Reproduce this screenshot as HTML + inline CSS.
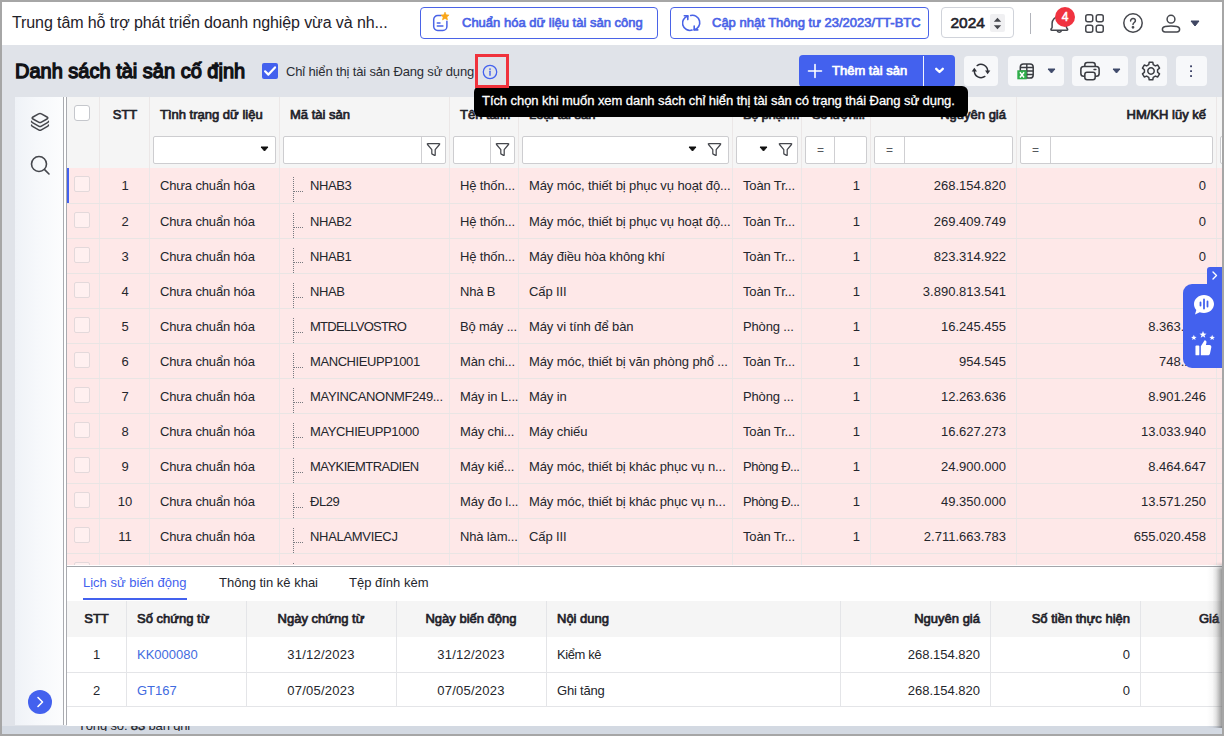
<!DOCTYPE html>
<html lang="vi">
<head>
<meta charset="utf-8">
<title>Danh sách tài sản cố định</title>
<style>
*{box-sizing:border-box;margin:0;padding:0}
html,body{width:1224px;height:736px;overflow:hidden;background:#a6a6a6}
body{font-family:"Liberation Sans",sans-serif;font-size:13px;color:#1f2229;position:relative}
#app{position:absolute;left:2px;top:2px;width:1220px;height:732px;background:#e0e3e9;overflow:hidden}
.abs{position:absolute}
/* ---------- top header ---------- */
#hdr{position:absolute;left:0;top:0;width:1220px;height:43px;background:#fff}
#org{position:absolute;left:10px;top:11px;font-size:16px;line-height:20px;color:#1f2229;white-space:nowrap;letter-spacing:-0.1px}
.obtn{position:absolute;top:5px;height:32px;border:1px solid #4a63e7;border-radius:4px;background:#fff;color:#4a63e7;-webkit-text-stroke:.65px #4a63e7;font-size:13px;line-height:30px;white-space:nowrap}
.obtn span{position:absolute;top:0}
#year{position:absolute;left:939px;top:5px;width:73px;height:31px;border:1px solid #d0d3da;border-radius:4px;background:#fff}
#year b{position:absolute;left:8.500px;top:5px;font-size:15.500px;font-weight:normal;-webkit-text-stroke:.6px #1f2229;line-height:20px;color:#1f2229}
#vsep{position:absolute;left:1028px;top:11px;width:1px;height:21px;background:#b2b4bb}
#badge{position:absolute;left:1053px;top:5px;width:20px;height:20px;border-radius:10px;background:#f03340;color:#fff;font-weight:normal;-webkit-text-stroke:.5px #fff;font-size:12px;line-height:20px;text-align:center}
/* ---------- toolbar ---------- */
#ttl{position:absolute;left:13px;top:57px;font-size:20px;line-height:24px;-webkit-text-stroke:1.300px #111216;color:#111216;white-space:nowrap}
#chk{position:absolute;left:260px;top:61px;width:16px;height:16px;border-radius:2px;background:#4361ee}
#chklbl{position:absolute;left:284px;top:62px;font-size:13px;line-height:16px;color:#2a2d34;white-space:nowrap;letter-spacing:-.15px}
#redbox{position:absolute;left:473px;top:52px;width:34px;height:34px;border:3px solid #f0323c;z-index:22}
#addbtn{position:absolute;left:797px;top:53px;width:156px;height:32px;border-radius:4px;background:#4361ee;color:#fff;-webkit-text-stroke:.7px #fff;font-size:13px}
#addbtn .t{position:absolute;left:33px;top:8px;line-height:16px;white-space:nowrap}
#addbtn .s{position:absolute;left:124px;top:1px;width:1px;height:31px;background:#f1f3fc}
.tb{position:absolute;top:54px;height:30px;border-radius:4px;background:#f7f8fa}
/* ---------- tooltip ---------- */
#tip{position:absolute;left:472px;top:84px;width:494px;height:31px;border-radius:6px;background:#000;color:#fff;font-size:13px;line-height:29px;padding-left:8px;letter-spacing:-.06px;-webkit-text-stroke:.3px #fff;white-space:nowrap;z-index:20}
/* ---------- sidebar ---------- */
#side{position:absolute;left:13px;top:95px;width:48px;height:628px;background:linear-gradient(90deg,#eff2f7 0,#f6f8fb 45%,#fcfdfe 100%)}
#sdiv{position:absolute;left:61px;top:95px;width:4px;height:628px;background:#fff;border-left:1px solid #a9abb0;border-right:1px solid #a9abb0}
#fab{position:absolute;left:26px;top:688px;width:24px;height:24px;border-radius:12px;background:#4361ee}
/* ---------- grid ---------- */
#grid{position:absolute;left:65px;top:95px;width:1155px;height:470px;background:#fee8e8;overflow:hidden}
.hrow{position:absolute;left:0;top:0;width:1155px;height:36px;background:#f5f5f5;border-bottom:1px solid #e1e1e2}
.frow{position:absolute;left:0;top:35px;width:1155px;height:36px;background:#f5f5f5}
.vl{position:absolute;top:0;width:1px;height:470px;background:#ebe7e7}
.hc{position:absolute;top:10px;-webkit-text-stroke:.7px #1f2229;font-size:13px;line-height:16px;color:#1f2229;white-space:nowrap}
.fi{position:absolute;top:39px;height:28px;background:#fff;border:1px solid #cdcdd0;border-radius:2px}
.row{position:absolute;left:0;width:1155px;height:35px;border-bottom:1px solid #e9e5e4}
.row span{position:absolute;top:10px;line-height:16px;font-size:13px;color:#24262c;white-space:nowrap}
.row i{position:absolute;left:7px;top:8px;width:16px;height:16px;border-radius:2px;background:#fff0f0;border:1px solid #e3d9db}
.c1{left:33px;width:50px;text-align:center}
.c2{left:93px;letter-spacing:-.15px}
.c3{left:243px;letter-spacing:-.55px}
.c4{left:393px;letter-spacing:-.15px}
.c5{left:462px;letter-spacing:-.1px}
.c6{left:676px;letter-spacing:-.15px}
.c7{left:745px;width:48px;text-align:right}
.c8{left:814px;width:125px;text-align:right}
.c9{left:960px;width:179px;text-align:right}
.tree{position:absolute;left:225px;top:1px;width:12px;height:35px}
/* ---------- bottom panel ---------- */
#bot{position:absolute;left:65px;top:564px;width:1155px;height:160px;z-index:5;background:#fff;border-top:1px solid #a3a5aa}
.tab{position:absolute;top:8px;font-size:13px;line-height:16px;color:#24262c;white-space:nowrap}
#bh{position:absolute;left:0;top:34px;width:1155px;height:36px;background:#f5f5f5}
.bhc{position:absolute;top:44px;-webkit-text-stroke:.7px #1f2229;font-size:13px;line-height:16px;color:#1f2229;white-space:nowrap}
.brow{position:absolute;left:0;width:1155px;height:36px;border-bottom:1px solid #e4e5e8}
.brow span{position:absolute;top:10px;line-height:16px;font-size:13px;color:#24262c;white-space:nowrap}
.bvl{position:absolute;top:34px;width:1px;height:106px;background:#e4e5e8}
#foot{position:absolute;left:76px;letter-spacing:-.15px;top:716px;height:13px;overflow:hidden;z-index:4;font-size:13px;line-height:16px;color:#24262c;white-space:nowrap}
#rshadow{position:absolute;left:1205px;top:560px;width:15px;height:166px;background:linear-gradient(90deg,rgba(90,90,90,0) 0,rgba(90,90,90,.04) 35%,rgba(90,90,90,.17) 60%,rgba(90,90,90,.42) 82%,rgba(90,90,90,.62) 100%);z-index:30;-webkit-mask-image:linear-gradient(180deg,transparent 0,#000 8px);mask-image:linear-gradient(180deg,transparent 0,#000 8px)}
</style>
</head>
<body>
<div id="app">
<div id="hdr">
<div id="org">Trung tâm hỗ trợ phát triển doanh nghiệp vừa và nh...</div>
<div class="obtn" style="left:418px;width:238px">
<svg class="abs" style="left:11px;top:4px" width="20" height="22" viewBox="0 0 20 22" fill="none"><path d="M9.200 3.600H5.700A4 4 0 0 0 1.700 7.600V14.500A4 4 0 0 0 5.700 18.500H10.900A4 4 0 0 0 14.900 14.500V9.300" stroke="#4a63e7" stroke-width="1.500" stroke-linecap="round"/><path d="M5.300 11H8M5.300 14.100H10.900" stroke="#4a63e7" stroke-width="1.500" stroke-linecap="round"/><path d="M13.00 0.10L14.18 2.78L17.09 3.07L14.90 5.02L15.53 7.88L13.00 6.40L10.47 7.88L11.10 5.02L8.91 3.07L11.82 2.78Z" fill="#f9a61a" stroke="#f9a61a" stroke-width=".6" stroke-linejoin="round"/></svg>
<span style="left:41px">Chuẩn hóa dữ liệu tài sản công</span></div>
<div class="obtn" style="left:668px;width:259px">
<svg class="abs" style="left:11px;top:4px" width="20" height="22" viewBox="0 0 20 22" fill="none" stroke="#4a63e7" stroke-width="1.600" stroke-linecap="round" stroke-linejoin="round"><path d="M10 18.100A7.300 7.300 0 0 1 5.800 4.100"/><path d="M2.300 3.800H5.800V7.600"/><path d="M8.700 3.500A7.300 7.300 0 0 1 12.100 17.800"/><path d="M12.200 14.100V17.900H15.800"/></svg>
<span style="left:41px">Cập nhật Thông tư 23/2023/TT-BTC</span></div>
<div id="year"><b>2024</b>
<div class="abs" style="left:48px;top:6px;width:15px;height:18px;background:#f0f0f2;border-radius:2px"></div>
<svg class="abs" style="left:51px;top:8.500px" width="9" height="13" viewBox="0 0 9 13"><path d="M.8 4.800L4.500 .8 8.200 4.800Z" fill="#45474d"/><path d="M.8 8.200L4.500 12.200 8.200 8.200Z" fill="#45474d"/></svg></div>
<div id="vsep"></div>
<svg class="abs" style="left:1046px;top:12px" width="22" height="22" viewBox="0 0 22 22" fill="none" stroke="#45474d" stroke-width="1.500" stroke-linecap="round" stroke-linejoin="round"><path d="M4.100 13.600V9.600C4.100 5.600 7.300 2.400 11.300 2.400 15.300 2.400 18.500 5.600 18.500 9.600V13.600L19.500 15C19.900 15.600 19.600 16.200 18.900 16.200H3.700C3 16.200 2.700 15.600 3.100 15Z"/><path d="M9.500 17.400C10 18.400 12.600 18.400 13.100 17.400"/></svg>
<div id="badge">4</div>
<svg class="abs" style="left:1082px;top:11px" width="22" height="22" viewBox="0 0 22 22" fill="none" stroke="#45474d" stroke-width="1.500"><rect x="1.750" y="1.750" width="7" height="7" rx="2"/><rect x="12.250" y="1.750" width="7" height="7" rx="2"/><rect x="1.750" y="12.250" width="7" height="7" rx="2"/><rect x="12.250" y="12.250" width="7" height="7" rx="2"/></svg>
<svg class="abs" style="left:1119px;top:9px" width="24" height="24" viewBox="0 0 24 24" fill="none" stroke="#45474d" stroke-width="1.500" stroke-linecap="round"><circle cx="12" cy="12" r="9.200"/><path d="M9.600 10C9.600 8.500 10.600 7.600 12 7.600 13.400 7.600 14.400 8.500 14.400 9.800 14.400 11.500 12 11.600 12 13.500"/><circle cx="12" cy="16.300" r="0.650" fill="#45474d"/></svg>
<svg class="abs" style="left:1158px;top:11px" width="22" height="22" viewBox="0 0 22 22" fill="none" stroke="#45474d" stroke-width="1.500" stroke-linejoin="round"><circle cx="11" cy="6.200" r="3.900"/><path d="M5.200 13.600C7 13.200 9 13.100 11 13.100 13 13.100 15 13.200 16.800 13.600 18.600 14 19.600 14.800 19.600 16.300 19.600 18 18.600 18.900 16.900 18.900H5.100C3.400 18.900 2.400 18 2.400 16.300 2.400 14.800 3.400 14 5.200 13.600Z"/></svg>
<svg class="abs" style="left:1188px;top:18px" width="10" height="7" viewBox="0 0 10 7"><path d="M1 1H9L5 6Z" fill="#3f4662" stroke="#3f4662" stroke-width="1" stroke-linejoin="round"/></svg>
</div>
<div id="ttl">Danh sách tài sản cố định</div>
<div id="chk"><svg class="abs" style="left:0;top:0" width="16" height="16" viewBox="0 0 16 16" fill="none"><path d="M3.100 8.300L6.400 11.600 13 4.400" stroke="#fff" stroke-width="2.200" stroke-linecap="round" stroke-linejoin="round"/></svg></div>
<div id="chklbl">Chỉ hiển thị tài sản Đang sử dụng</div>
<svg class="abs" style="left:480px;top:62px" width="16" height="16" viewBox="0 0 16 16" fill="none"><circle cx="8" cy="8" r="6.700" stroke="#4361ee" stroke-width="1.300"/><circle cx="8" cy="5.100" r="0.900" fill="#4361ee"/><path d="M8 7.300V11.300" stroke="#4361ee" stroke-width="1.400" stroke-linecap="round"/></svg>
<div id="redbox"></div>
<div id="addbtn"><svg class="abs" style="left:8px;top:8px" width="16" height="16" viewBox="0 0 16 16"><path d="M8 1.500V14.500M1.500 8H14.500" stroke="#fff" stroke-width="1.600" stroke-linecap="round"/></svg><div class="t">Thêm tài sản</div><div class="s"></div>
<svg class="abs" style="left:135px;top:12px" width="11" height="8" viewBox="0 0 11 8" fill="none"><path d="M2.200 1.800L5.500 5 8.800 1.800" stroke="#fff" stroke-width="2.300" stroke-linecap="round" stroke-linejoin="round"/></svg></div>
<div class="tb" style="left:962px;width:34px"><svg class="abs" style="left:6px;top:4px" width="22" height="22" viewBox="0 0 22 22" fill="none"><path d="M7.160 5.510A6.700 6.700 0 0 1 17.670 11" stroke="#2f3138" stroke-width="1.500" stroke-linecap="round"/><path d="M15 10.600H20.300L17.650 14.200Z" fill="#2f3138"/><path d="M14.840 16.490A6.700 6.700 0 0 1 4.330 11" stroke="#2f3138" stroke-width="1.500" stroke-linecap="round"/><path d="M7 11.400H1.700L4.350 7.800Z" fill="#2f3138"/></svg></div>
<div class="tb" style="left:1006px;width:56px"><svg class="abs" style="left:9px;top:5px" width="20" height="20" viewBox="0 0 20 20" fill="none"><path d="M6.500 2.900H13C15 2.900 16.200 4.100 16.200 6.100V13.900C16.200 15.900 15 17.100 13 17.100H6.500C4.500 17.100 3.300 15.900 3.300 13.900V6.100C3.300 4.100 4.500 2.900 6.500 2.900Z" stroke="#3a3c42" stroke-width="1.500"/><path d="M3.300 6.500H16.200M3.300 10H16.200M3.300 13.500H16.200M9.800 2.900V17.100" stroke="#3a3c42" stroke-width="1.400"/><rect x="0.300" y="9.300" width="9.400" height="9" fill="#2fae4a"/><path d="M2.900 11.300L7.100 16.500M7.100 11.300L2.900 16.500" stroke="#fff" stroke-width="1.500"/></svg>
<svg class="abs" style="left:39px;top:12px" width="9" height="6" viewBox="0 0 9 6"><path d="M1 1H8L4.500 5Z" fill="#3f4a6b" stroke="#3f4a6b" stroke-width="1" stroke-linejoin="round"/></svg></div>
<div class="tb" style="left:1070px;width:56px"><svg class="abs" style="left:7px;top:4px" width="22" height="22" viewBox="0 0 20 20" fill="none" stroke="#3a3c42" stroke-width="1.400" stroke-linejoin="round"><path d="M5.300 6V4.300C5.300 3 6.200 2.200 7.500 2.200H12.500C13.800 2.200 14.700 3 14.700 4.300V6"/><path d="M5.300 14.700H4.200C2.700 14.700 1.700 13.700 1.700 12.200V8.500C1.700 7 2.700 6 4.200 6H15.800C17.300 6 18.300 7 18.300 8.500V12.200C18.300 13.700 17.300 14.700 15.800 14.700H14.700"/><rect x="5.300" y="11.200" width="9.400" height="6.700" rx="2"/><path d="M13.700 8.700H15.300" stroke-linecap="round"/></svg>
<svg class="abs" style="left:40px;top:12px" width="9" height="6" viewBox="0 0 9 6"><path d="M1 1H8L4.500 5Z" fill="#3f4a6b" stroke="#3f4a6b" stroke-width="1" stroke-linejoin="round"/></svg></div>
<div class="tb" style="left:1134px;width:31px"><svg class="abs" style="left:4px;top:4px" width="22" height="22" viewBox="-11 -11 22 22" fill="none" stroke="#3a3c42" stroke-width="1.500" stroke-linejoin="round"><circle cx="0" cy="0" r="3.200"/><path d="M-2.230 -6.320 L-1.790 -8.820 L1.790 -8.820 L2.230 -6.320 L4.350 -5.090 L6.740 -5.960 L8.530 -2.860 L6.590 -1.220 L6.590 1.220 L8.530 2.860 L6.740 5.960 L4.350 5.090 L2.230 6.320 L1.790 8.820 L-1.790 8.820 L-2.230 6.320 L-4.350 5.090 L-6.740 5.960 L-8.530 2.860 L-6.590 1.220 L-6.590 -1.220 L-8.530 -2.860 L-6.740 -5.960 L-4.350 -5.090Z"/></svg></div>
<div class="tb" style="left:1174px;width:31px"><svg class="abs" style="left:13px;top:7px" width="4" height="16" viewBox="0 0 4 16" fill="#3b4166"><rect x="1.100" y="2.300" width="1.900" height="1.900" rx=".4"/><rect x="1.100" y="7.200" width="1.900" height="1.900" rx=".4"/><rect x="1.100" y="12.100" width="1.900" height="1.900" rx=".4"/></svg></div>
<div id="tip">Tích chọn khi muốn xem danh sách chỉ hiển thị tài sản có trạng thái Đang sử dụng.</div>
<div id="side">
<svg class="abs" style="left:13px;top:13px" width="24" height="24" viewBox="0 0 24 24" fill="none" stroke="#45474d" stroke-width="1.500" stroke-linejoin="round" stroke-linecap="round"><path d="M5 7L10.600 3.800Q12 3 13.400 3.800L19 7Q20.700 8 19 9L13.400 12.200Q12 13 10.600 12.200L5 9Q3.300 8 5 7Z"/><path d="M3.600 11.300Q3.300 11.900 4.500 12.600L10.600 16.100Q12 16.900 13.400 16.100L19.500 12.600Q20.700 11.900 20.400 11.300"/><path d="M3.600 15.100Q3.300 15.700 4.500 16.400L10.600 19.900Q12 20.700 13.400 19.900L19.500 16.400Q20.700 15.700 20.400 15.100"/></svg>
<svg class="abs" style="left:13px;top:56px" width="24" height="24" viewBox="0 0 24 24" fill="none" stroke="#45474d" stroke-width="1.600" stroke-linecap="round"><circle cx="11" cy="11" r="7.500"/><path d="M16.600 16.600L21 21"/></svg>
</div>
<div id="sdiv"></div>
<div id="fab"><svg class="abs" style="left:8px;top:6px" width="8" height="12" viewBox="0 0 8 12" fill="none"><path d="M2 1.500L6.500 6 2 10.500" stroke="#fff" stroke-width="1.600" stroke-linecap="round" stroke-linejoin="round"/></svg></div>
<div id="grid">
<div class="hrow"></div><div class="frow"></div>
<div class="vl" style="left:32px"></div>
<div class="vl" style="left:82px"></div>
<div class="vl" style="left:212px"></div>
<div class="vl" style="left:382px"></div>
<div class="vl" style="left:451px"></div>
<div class="vl" style="left:665px"></div>
<div class="vl" style="left:734px"></div>
<div class="vl" style="left:803px"></div>
<div class="vl" style="left:949px"></div>
<div class="vl" style="left:1149px"></div>
<div class="abs" style="left:7px;top:8px;width:16px;height:16px;border:1px solid #c5c7cc;border-radius:3px;background:#fff"></div>
<div class="hc" style="left:33px;width:50px;text-align:center">STT</div>
<div class="hc" style="left:93px">Tình trạng dữ liệu</div>
<div class="hc" style="left:223px">Mã tài sản</div>
<div class="hc" style="left:393px">Tên tài...</div>
<div class="hc" style="left:462px">Loại tài sản</div>
<div class="hc" style="left:676px;letter-spacing:-.3px">Bộ phận...</div>
<div class="hc" style="left:745px;letter-spacing:-.5px">Số lượn...</div>
<div class="hc" style="left:814px;width:125px;text-align:right">Nguyên giá</div>
<div class="hc" style="left:960px;width:179px;text-align:right">HM/KH lũy kế</div>
<div class="fi" style="left:86px;width:123px"><svg class="abs" style="left:106px;top:9px" width="9" height="6" viewBox="0 0 9 6"><path d="M1 1H8L4.500 5Z" fill="#111" stroke="#111" stroke-width="1" stroke-linejoin="round"/></svg></div>
<div class="fi" style="left:216px;width:163px"><div class="abs" style="left:137px;top:0;width:1px;height:26px;background:#cfcfd2"></div><svg class="abs" style="left:142px;top:5px" width="15" height="15" viewBox="0 0 15 15" fill="none"><path d="M1.900 1.600H13.100Q14.100 1.600 13.500 2.500L9.200 7.600V13Q9.200 13.700 8.600 13.400L6.200 12.100Q5.800 11.900 5.800 11.400V7.600L1.500 2.500Q.9 1.600 1.900 1.600Z" stroke="#45474d" stroke-width="1.250" stroke-linejoin="round"/></svg></div>
<div class="fi" style="left:386px;width:62px"><div class="abs" style="left:36px;top:0;width:1px;height:26px;background:#cfcfd2"></div><svg class="abs" style="left:41px;top:5px" width="15" height="15" viewBox="0 0 15 15" fill="none"><path d="M1.900 1.600H13.100Q14.100 1.600 13.500 2.500L9.200 7.600V13Q9.200 13.700 8.600 13.400L6.200 12.100Q5.800 11.900 5.800 11.400V7.600L1.500 2.500Q.9 1.600 1.900 1.600Z" stroke="#45474d" stroke-width="1.250" stroke-linejoin="round"/></svg></div>
<div class="fi" style="left:455px;width:207px"><svg class="abs" style="left:165px;top:9px" width="9" height="6" viewBox="0 0 9 6"><path d="M1 1H8L4.500 5Z" fill="#111" stroke="#111" stroke-width="1" stroke-linejoin="round"/></svg><svg class="abs" style="left:184px;top:5px" width="15" height="15" viewBox="0 0 15 15" fill="none"><path d="M1.900 1.600H13.100Q14.100 1.600 13.500 2.500L9.200 7.600V13Q9.200 13.700 8.600 13.400L6.200 12.100Q5.800 11.900 5.800 11.400V7.600L1.500 2.500Q.9 1.600 1.900 1.600Z" stroke="#45474d" stroke-width="1.250" stroke-linejoin="round"/></svg></div>
<div class="fi" style="left:669px;width:62px"><svg class="abs" style="left:22px;top:9px" width="9" height="6" viewBox="0 0 9 6"><path d="M1 1H8L4.500 5Z" fill="#111" stroke="#111" stroke-width="1" stroke-linejoin="round"/></svg><svg class="abs" style="left:41px;top:5px" width="15" height="15" viewBox="0 0 15 15" fill="none"><path d="M1.900 1.600H13.100Q14.100 1.600 13.500 2.500L9.200 7.600V13Q9.200 13.700 8.600 13.400L6.200 12.100Q5.800 11.900 5.800 11.400V7.600L1.500 2.500Q.9 1.600 1.900 1.600Z" stroke="#45474d" stroke-width="1.250" stroke-linejoin="round"/></svg></div>
<div class="fi" style="left:738px;width:62px"><div class="abs" style="left:11px;top:5px;font-size:12px;line-height:16px;color:#55585f">=</div><div class="abs" style="left:28px;top:0;width:1px;height:26px;background:#cfcfd2"></div></div>
<div class="fi" style="left:807px;width:139px"><div class="abs" style="left:11px;top:5px;font-size:12px;line-height:16px;color:#55585f">=</div><div class="abs" style="left:29px;top:0;width:1px;height:26px;background:#cfcfd2"></div></div>
<div class="fi" style="left:953px;width:193px"><div class="abs" style="left:11px;top:5px;font-size:12px;line-height:16px;color:#55585f">=</div><div class="abs" style="left:29px;top:0;width:1px;height:26px;background:#cfcfd2"></div></div>
<div class="fi" style="left:1153px;width:80px"></div>
<div class="row" style="top:71px;height:36px"><i></i><span class="c1">1</span><span class="c2">Chưa chuẩn hóa</span><svg class="tree" viewBox="0 0 12 35" fill="none" stroke="#77797f" stroke-width="1" stroke-dasharray="1 1"><path d="M1.500 8V33"/><path d="M2 22.500H12"/></svg><span class="c3" style="letter-spacing:-0.38px">NHAB3</span><span class="c4">Hệ thốn...</span><span class="c5">Máy móc, thiết bị phục vụ hoạt độ...</span><span class="c6">Toàn Tr...</span><span class="c7">1</span><span class="c8">268.154.820</span><span class="c9">0</span></div>
<div class="row" style="top:107px"><i></i><span class="c1">2</span><span class="c2">Chưa chuẩn hóa</span><svg class="tree" viewBox="0 0 12 35" fill="none" stroke="#77797f" stroke-width="1" stroke-dasharray="1 1"><path d="M1.500 8V33"/><path d="M2 22.500H12"/></svg><span class="c3" style="letter-spacing:-0.38px">NHAB2</span><span class="c4">Hệ thốn...</span><span class="c5">Máy móc, thiết bị phục vụ hoạt độ...</span><span class="c6">Toàn Tr...</span><span class="c7">1</span><span class="c8">269.409.749</span><span class="c9">0</span></div>
<div class="row" style="top:142px"><i></i><span class="c1">3</span><span class="c2">Chưa chuẩn hóa</span><svg class="tree" viewBox="0 0 12 35" fill="none" stroke="#77797f" stroke-width="1" stroke-dasharray="1 1"><path d="M1.500 8V33"/><path d="M2 22.500H12"/></svg><span class="c3" style="letter-spacing:-0.38px">NHAB1</span><span class="c4">Hệ thốn...</span><span class="c5">Máy điều hòa không khí</span><span class="c6">Toàn Tr...</span><span class="c7">1</span><span class="c8">823.314.922</span><span class="c9">0</span></div>
<div class="row" style="top:177px"><i></i><span class="c1">4</span><span class="c2">Chưa chuẩn hóa</span><svg class="tree" viewBox="0 0 12 35" fill="none" stroke="#77797f" stroke-width="1" stroke-dasharray="1 1"><path d="M1.500 8V33"/><path d="M2 22.500H12"/></svg><span class="c3" style="letter-spacing:-0.4px">NHAB</span><span class="c4">Nhà B</span><span class="c5">Cấp III</span><span class="c6">Toàn Tr...</span><span class="c7">1</span><span class="c8">3.890.813.541</span><span class="c9">0</span></div>
<div class="row" style="top:212px"><i></i><span class="c1">5</span><span class="c2">Chưa chuẩn hóa</span><svg class="tree" viewBox="0 0 12 35" fill="none" stroke="#77797f" stroke-width="1" stroke-dasharray="1 1"><path d="M1.500 8V33"/><path d="M2 22.500H12"/></svg><span class="c3" style="letter-spacing:-0.76px">MTDELLVOSTRO</span><span class="c4">Bộ máy ...</span><span class="c5">Máy vi tính để bàn</span><span class="c6">Phòng ...</span><span class="c7">1</span><span class="c8">16.245.455</span><span class="c9">8.363.636</span></div>
<div class="row" style="top:247px"><i></i><span class="c1">6</span><span class="c2">Chưa chuẩn hóa</span><svg class="tree" viewBox="0 0 12 35" fill="none" stroke="#77797f" stroke-width="1" stroke-dasharray="1 1"><path d="M1.500 8V33"/><path d="M2 22.500H12"/></svg><span class="c3" style="letter-spacing:-0.42px">MANCHIEUPP1001</span><span class="c4">Màn chi...</span><span class="c5">Máy móc, thiết bị văn phòng phổ ...</span><span class="c6">Toàn Tr...</span><span class="c7">1</span><span class="c8">954.545</span><span class="c9">748.182</span></div>
<div class="row" style="top:282px"><i></i><span class="c1">7</span><span class="c2">Chưa chuẩn hóa</span><svg class="tree" viewBox="0 0 12 35" fill="none" stroke="#77797f" stroke-width="1" stroke-dasharray="1 1"><path d="M1.500 8V33"/><path d="M2 22.500H12"/></svg><span class="c3" style="letter-spacing:-0.32px">MAYINCANONMF249...</span><span class="c4">Máy in L...</span><span class="c5">Máy in</span><span class="c6">Phòng ...</span><span class="c7">1</span><span class="c8">12.263.636</span><span class="c9">8.901.246</span></div>
<div class="row" style="top:317px"><i></i><span class="c1">8</span><span class="c2">Chưa chuẩn hóa</span><svg class="tree" viewBox="0 0 12 35" fill="none" stroke="#77797f" stroke-width="1" stroke-dasharray="1 1"><path d="M1.500 8V33"/><path d="M2 22.500H12"/></svg><span class="c3" style="letter-spacing:-0.37px">MAYCHIEUPP1000</span><span class="c4">Máy chi...</span><span class="c5">Máy chiếu</span><span class="c6">Toàn Tr...</span><span class="c7">1</span><span class="c8">16.627.273</span><span class="c9">13.033.940</span></div>
<div class="row" style="top:352px"><i></i><span class="c1">9</span><span class="c2">Chưa chuẩn hóa</span><svg class="tree" viewBox="0 0 12 35" fill="none" stroke="#77797f" stroke-width="1" stroke-dasharray="1 1"><path d="M1.500 8V33"/><path d="M2 22.500H12"/></svg><span class="c3" style="letter-spacing:-0.53px">MAYKIEMTRADIEN</span><span class="c4">Máy kiể...</span><span class="c5">Máy móc, thiết bị khác phục vụ n...</span><span class="c6" style="letter-spacing:-.5px">Phòng Đ...</span><span class="c7">1</span><span class="c8">24.900.000</span><span class="c9">8.464.647</span></div>
<div class="row" style="top:387px"><i></i><span class="c1">10</span><span class="c2">Chưa chuẩn hóa</span><svg class="tree" viewBox="0 0 12 35" fill="none" stroke="#77797f" stroke-width="1" stroke-dasharray="1 1"><path d="M1.500 8V33"/><path d="M2 22.500H12"/></svg><span class="c3" style="letter-spacing:-0.47px">ĐL29</span><span class="c4">Máy đo l...</span><span class="c5">Máy móc, thiết bị khác phục vụ n...</span><span class="c6" style="letter-spacing:-.5px">Phòng Đ...</span><span class="c7">1</span><span class="c8">49.350.000</span><span class="c9">13.571.250</span></div>
<div class="row" style="top:422px"><i></i><span class="c1">11</span><span class="c2">Chưa chuẩn hóa</span><svg class="tree" viewBox="0 0 12 35" fill="none" stroke="#77797f" stroke-width="1" stroke-dasharray="1 1"><path d="M1.500 8V33"/><path d="M2 22.500H12"/></svg><span class="c3" style="letter-spacing:-0.31px">NHALAMVIECJ</span><span class="c4">Nhà làm...</span><span class="c5">Cấp III</span><span class="c6">Toàn Tr...</span><span class="c7">1</span><span class="c8">2.711.663.783</span><span class="c9">655.020.458</span></div>
<div class="row" style="top:457px"><i></i><svg class="tree" viewBox="0 0 12 35" fill="none" stroke="#77797f" stroke-width="1" stroke-dasharray="1 1"><path d="M1.500 8V33"/><path d="M2 22.500H12"/></svg></div>
<div class="abs" style="left:0;top:71px;width:2px;height:35px;background:#4361ee"></div>
</div>
<div id="bot">
<div class="tab" style="left:16px;color:#4361ee">Lịch sử biến động</div>
<div class="abs" style="left:16px;top:31px;width:104px;height:2px;background:#4361ee"></div>
<div class="tab" style="left:152px">Thông tin kê khai</div>
<div class="tab" style="left:282px">Tệp đính kèm</div>
<div id="bh"></div>
<div class="bvl" style="left:59px"></div>
<div class="bvl" style="left:179px"></div>
<div class="bvl" style="left:329px"></div>
<div class="bvl" style="left:479px"></div>
<div class="bvl" style="left:773px"></div>
<div class="bvl" style="left:923px"></div>
<div class="bvl" style="left:1073px"></div>
<div class="bhc" style="left:0;width:59px;text-align:center">STT</div>
<div class="bhc" style="left:70px">Số chứng từ</div>
<div class="bhc" style="left:179px;width:150px;text-align:center">Ngày chứng từ</div>
<div class="bhc" style="left:329px;width:150px;text-align:center">Ngày biến động</div>
<div class="bhc" style="left:490px">Nội dung</div>
<div class="bhc" style="left:773px;width:140px;text-align:right">Nguyên giá</div>
<div class="bhc" style="left:923px;width:140px;text-align:right">Số tiền thực hiện</div>
<div class="bhc" style="left:1132px">Giá trị còn lại</div>
<div class="brow" style="top:70px"><span style="left:0;width:59px;text-align:center">1</span><span style="left:70px;color:#3f6be0">KK000080</span><span style="left:179px;width:150px;text-align:center;letter-spacing:.25px">31/12/2023</span><span style="left:329px;width:150px;text-align:center;letter-spacing:.25px">31/12/2023</span><span style="left:490px;letter-spacing:-.4px">Kiểm kê</span><span style="left:773px;width:140px;text-align:right">268.154.820</span><span style="left:923px;width:140px;text-align:right">0</span></div>
<div class="brow" style="top:106px;height:34px"><span style="left:0;width:59px;text-align:center">2</span><span style="left:70px;color:#3f6be0">GT167</span><span style="left:179px;width:150px;text-align:center;letter-spacing:.25px">07/05/2023</span><span style="left:329px;width:150px;text-align:center;letter-spacing:.25px">07/05/2023</span><span style="left:490px;letter-spacing:-.2px">Ghi tăng</span><span style="left:773px;width:140px;text-align:right">268.154.820</span><span style="left:923px;width:140px;text-align:right">0</span></div>
</div>
<div class="abs" style="left:65px;top:563px;width:1155px;height:1px;background:#fff;z-index:5"></div>
<div id="foot">Tổng số: <b style="font-weight:normal;-webkit-text-stroke:.5px #24262c">83</b> bản ghi</div>
<div class="abs" style="left:0;top:724px;width:1220px;height:8px;background:#d3d9e2;z-index:3"></div>
<div id="rshadow"></div>
<div class="abs" style="left:1205px;top:265px;width:15px;height:17px;background:#4361ee;border-radius:3px 0 0 0;z-index:25"><svg class="abs" style="left:5px;top:4px" width="6" height="9" viewBox="0 0 6 9" fill="none"><path d="M1 1L4.500 4.500 1 8" stroke="#fff" stroke-width="1.400" stroke-linecap="round" stroke-linejoin="round"/></svg></div>
<div class="abs" style="left:1181px;top:282px;width:39px;height:84px;background:#4361ee;border-radius:9px 0 0 9px;z-index:25">
<svg class="abs" style="left:9px;top:9px" width="24" height="24" viewBox="0 0 24 24"><path d="M12 2C17.500 2 22 6 22 11 22 16 17.500 20 12 20 10.400 20 9 19.700 7.700 19.200L3 21.500 4.300 17C2.800 15.400 2 13.300 2 11 2 6 6.500 2 12 2Z" fill="#fff"/><path d="M8.500 9.500V12.500M12 6.500V15.500M15.500 8.500V13.500" stroke="#4361ee" stroke-width="1.800" stroke-linecap="round"/></svg>
<svg class="abs" style="left:6px;top:46px" width="28" height="28" viewBox="0 0 26 26" fill="#fff"><path d="M13 1L13.900 3.300 16.300 3.400 14.400 4.900 15.100 7.200 13 5.900 10.900 7.200 11.600 4.900 9.700 3.400 12.100 3.300Z"/><path d="M4.500 4.500L5.200 6.300 7.100 6.400 5.600 7.600 6.100 9.400 4.500 8.400 2.900 9.400 3.400 7.600 1.900 6.400 3.800 6.300Z"/><path d="M21.500 4.500L22.200 6.300 24.100 6.400 22.600 7.600 23.100 9.400 21.500 8.400 19.900 9.400 20.400 7.600 18.900 6.400 20.800 6.300Z"/><rect x="6" y="14.500" width="3.600" height="9" rx="0.800"/><path d="M11 15L14.500 9.500C15.800 9.500 16.500 10.600 16.200 11.800L15.700 14H19C20.200 14 21 15 20.700 16.200L19.500 21.800C19.300 22.800 18.500 23.500 17.500 23.500H11Z"/></svg>
</div>
</div>
</body>
</html>
